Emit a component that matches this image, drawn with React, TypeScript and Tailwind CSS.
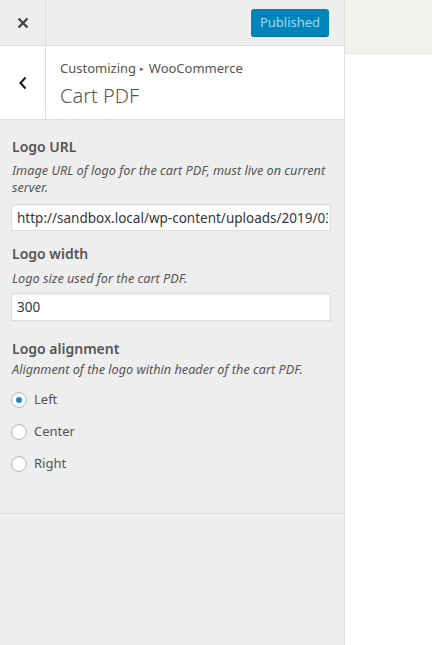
import React from "react";

function Radio({ label, checked }: { label: string; checked?: boolean }) {
  return (
    <label className="flex items-center h-[32px] gap-[7px]">
      <span className="w-[16px] h-[16px] rounded-full border border-[#b4b9be] bg-white flex items-center justify-center shadow-[inset_0_1px_2px_rgba(0,0,0,0.1)]">
        {checked && <span className="w-[6px] h-[6px] rounded-full bg-[#1e8cbe]" />}
      </span>
      <span className="text-[13px] text-[#555]">{label}</span>
    </label>
  );
}

export default function App() {
  return (
    <div className="w-[432px] h-[645px] flex bg-white" style={{ fontFamily: '"Noto Sans", "Open Sans", sans-serif' }}>
      <div className="w-[345px] h-full flex flex-col bg-[#eee] border-r border-[#ddd]">
        <div className="h-[46px] flex border-b border-[#ddd] bg-[#eee]">
          <div className="w-[46px] flex items-center justify-center border-r border-[#ddd]">
            <svg width="12" height="12" viewBox="0 0 12 12">
              <path d="M1.5 1.5 L10.5 10.5 M10.5 1.5 L1.5 10.5" stroke="#444" strokeWidth="2.4" strokeLinecap="butt" />
            </svg>
          </div>
          <div className="flex-1 flex items-start justify-end pt-[9px] pr-[15px]">
            <div className="h-[27px] w-[78px] justify-center rounded-[3px] bg-[#0085ba] text-[#a6d6ec] text-[13px] flex items-center shadow-[0_1px_0_#006799]">
              Published
            </div>
          </div>
        </div>
        <div className="h-[74px] flex bg-white border-b border-[#ddd]">
          <div className="w-[46px] flex items-center justify-center border-r border-[#ddd]">
            <svg width="10" height="14" viewBox="0 0 10 14">
              <path d="M7.5 1.5 L2.5 7 L7.5 12.5" stroke="#222" strokeWidth="2.2" fill="none" />
            </svg>
          </div>
          <div className="flex-1 pl-[14px] pt-[12px]">
            <div className="text-[13px] text-[#555] leading-[20px]">
              Customizing <span className="text-[7px] relative top-[-2px] mx-[1px]">▸</span> WooCommerce
            </div>
            <div className="text-[20px] text-[#555] font-light leading-[28px] mt-[1px]">Cart PDF</div>
          </div>
        </div>
        <div className="px-[12px] pt-[16px] h-[394px] border-b border-[#ddd]">
          <div className="text-[14px] font-semibold text-[#555] leading-[22px]">Logo URL</div>
          <div className="text-[12.7px] italic text-[#555] leading-[17px] mt-[4px] pr-[4px]">
            Image URL of logo for the cart PDF, must live on current server.
          </div>
          <input
            readOnly
            value="http://sandbox.local/wp-content/uploads/2019/03/logo.png"
            className="mt-[8px] w-[320px] h-[27px] -ml-[1px] border border-[#ddd] bg-white pl-[5px] pr-[2px] text-[13.5px] text-[#32373c] outline-none shadow-[inset_0_1px_2px_rgba(0,0,0,0.07)]"
          />
          <div className="text-[14px] font-semibold text-[#555] leading-[22px] mt-[12px]">Logo width</div>
          <div className="text-[12.7px] italic text-[#555] leading-[17px] mt-[5px]">Logo size used for the cart PDF.</div>
          <input
            readOnly
            value="300"
            className="mt-[6px] w-[320px] h-[28px] -ml-[1px] border border-[#ddd] bg-white pl-[5px] text-[13.5px] text-[#32373c] outline-none shadow-[inset_0_1px_2px_rgba(0,0,0,0.07)]"
          />
          <div className="text-[14px] font-semibold text-[#555] leading-[22px] mt-[17px]">Logo alignment</div>
          <div className="text-[12.7px] italic text-[#555] leading-[17px] mt-[1px]">Alignment of the logo within header of the cart PDF.</div>
          <div className="mt-[6px] flex flex-col -ml-[1px]">
            <Radio label="Left" checked />
            <Radio label="Center" />
            <Radio label="Right" />
          </div>
        </div>
        <div className="flex-1" />
      </div>
      <div className="flex-1 flex flex-col">
        <div className="h-[55px] bg-[#f1f1ed]" />
        <div className="flex-1 bg-white" />
      </div>
    </div>
  );
}
